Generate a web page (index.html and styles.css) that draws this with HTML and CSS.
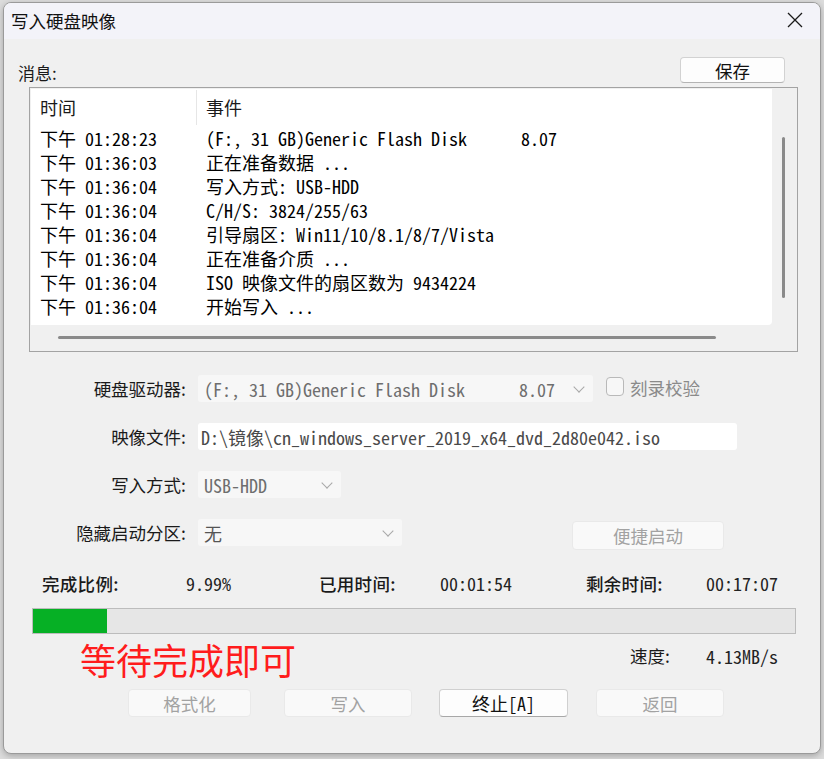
FILE: index.html
```html
<!DOCTYPE html>
<html lang="zh-CN">
<head>
<meta charset="utf-8">
<title>写入硬盘映像</title>
<link rel="stylesheet" href="styles.css">
</head>
<body>
<div class="window">
  <div class="titlebar">
    <span class="title">写入硬盘映像</span>
    <span class="close"><svg width="16" height="16" viewBox="0 0 16 16"><path d="M1 1 L15 15 M15 1 L1 15" stroke="#1a1a1a" stroke-width="1.3" fill="none"/></svg></span>
  </div>
  <div class="body">
    <div class="msg-head">
      <span class="msg-label">消息:</span>
      <button class="btn btn-save">保存</button>
    </div>
    <div class="list">
      <div class="list-main">
        <div class="list-header">
          <div class="col-time">时间</div>
          <div class="col-event">事件</div>
        </div>
        <div class="row"><span class="c-time">下午 01:28:23</span><span class="c-event">(F:, 31 GB)Generic Flash Disk      8.07</span></div>
        <div class="row"><span class="c-time">下午 01:36:03</span><span class="c-event">正在准备数据 ...</span></div>
        <div class="row"><span class="c-time">下午 01:36:04</span><span class="c-event">写入方式: USB-HDD</span></div>
        <div class="row"><span class="c-time">下午 01:36:04</span><span class="c-event">C/H/S: 3824/255/63</span></div>
        <div class="row"><span class="c-time">下午 01:36:04</span><span class="c-event">引导扇区: Win11/10/8.1/8/7/Vista</span></div>
        <div class="row"><span class="c-time">下午 01:36:04</span><span class="c-event">正在准备介质 ...</span></div>
        <div class="row"><span class="c-time">下午 01:36:04</span><span class="c-event">ISO 映像文件的扇区数为 9434224</span></div>
        <div class="row"><span class="c-time">下午 01:36:04</span><span class="c-event">开始写入 ...</span></div>
      </div>
      <div class="vscroll"><div class="vthumb"></div></div>
      <div class="hscroll"><div class="hthumb"></div></div>
      <div class="corner"></div>
    </div>

    <div class="frow">
      <label class="flabel">硬盘驱动器:</label>
      <div class="field combo w-drive"><span class="ftext mono">(F:, 31 GB)Generic Flash Disk      8.07</span><span class="chev"></span></div>
      <span class="check"></span><span class="check-label">刻录校验</span>
    </div>
    <div class="frow">
      <label class="flabel">映像文件:</label>
      <div class="field text w-file"><span class="ftext mono dark">D:\镜像\cn_windows_server_2019_x64_dvd_2d80e042.iso</span></div>
    </div>
    <div class="frow">
      <label class="flabel">写入方式:</label>
      <div class="field combo w-mode"><span class="ftext mono">USB-HDD</span><span class="chev"></span></div>
    </div>
    <div class="frow">
      <label class="flabel">隐藏启动分区:</label>
      <div class="field combo w-hide"><span class="ftext sans">无</span><span class="chev"></span></div>
      <button class="btn btn-dis btn-quick">便捷启动</button>
    </div>

    <div class="status">
      <span class="s-label">完成比例:</span>
      <span class="s-val">9.99%</span>
      <span class="s-label">已用时间:</span>
      <span class="s-val">00:01:54</span>
      <span class="s-label">剩余时间:</span>
      <span class="s-val">00:17:07</span>
    </div>

    <div class="progress"><div class="progress-fill" style="width:74px"></div></div>

    <div class="bottom-row">
      <span class="red">等待完成即可</span>
      <span class="speed-label">速度:</span>
      <span class="speed-val">4.13MB/s</span>
    </div>

    <div class="buttons">
      <button class="btn btn-dis b1">格式化</button>
      <button class="btn btn-dis b2">写入</button>
      <button class="btn btn-on b3">终止[A]</button>
      <button class="btn btn-dis b4">返回</button>
    </div>
  </div>
</div>
</body>
</html>
```
FILE: styles.css
```css
* { box-sizing: border-box; }
html, body { margin: 0; padding: 0; }
body {
  width: 824px;
  height: 759px;
  overflow: hidden;
  background: #dcdcdc;
  font-family: "Noto Sans CJK SC", "Noto Sans", sans-serif;
  color: #1a1a1a;
}
.window {
  margin: 2px 0 0 3px;
  width: 818px;
  height: 752px;
  border: 1px solid #9a9a9a;
  border-radius: 8px;
  background: #f0f0f0;
  overflow: hidden;
  box-shadow: 0 2px 6px rgba(0,0,0,0.25);
}
.titlebar {
  height: 36px;
  background: #f3f3f9;
  display: flex;
  align-items: center;
  justify-content: space-between;
  padding: 0 17px 0 7px;
}
.title { font-size: 17.5px; line-height: 20px; color: #111; margin-top: -1px; }
.close { display: flex; width: 16px; height: 16px; margin-top: -2px; }

.msg-head {
  margin: 18px 35px 0 14px;
  height: 26px;
  display: flex;
  justify-content: space-between;
  align-items: flex-end;
}
.msg-label { font-size: 17px; line-height: 20px; margin-bottom: 0; }
.btn {
  font-family: "Noto Sans CJK SC", sans-serif;
  font-size: 17.5px;
  border-radius: 4px;
  padding: 0;
  display: flex;
  align-items: center;
  justify-content: center;
}
.btn-save {
  width: 105px;
  height: 26px;
  background: #fdfdfd;
  border: 1px solid #d2d2d2;
  border-bottom-color: #b4b4b4;
  color: #111;
}

.list {
  margin: 4px 0 0 25px;
  width: 769px;
  height: 265px;
  border: 1px solid #a3a3a3;
  padding: 1px;
  background: #f0f0f0;
  display: grid;
  grid-template-columns: 741px 24px;
  grid-template-rows: 236px 25px;
}
.list-main {
  background: #fff;
  border-bottom-right-radius: 4px;
  overflow: hidden;
}
.list-header {
  height: 37px;
  display: flex;
  align-items: stretch;
  font-size: 18px;
}
.col-time {
  width: 166px;
  padding: 4px 0 0 9px;
  border-right: 1px solid #e6e6e6;
  margin-top: 1px;
  margin-bottom: 1px;
}
.col-event { padding: 5px 0 0 9px; }
.row {
  height: 24px;
  display: flex;
  align-items: center;
  font-family: "Noto Sans Mono CJK SC", "Liberation Mono", monospace;
  font-size: 18px;
  white-space: pre;
  color: #000;
}
.c-time { width: 166px; padding-left: 9px; }
.c-event { padding-left: 9px; }
.vscroll { position: relative; }
.vthumb {
  margin: 48px 0 0 10px;
  width: 3px;
  height: 161px;
  background: #8a8a8a;
  border-radius: 2px;
}
.hthumb {
  margin: 11px 0 0 27px;
  width: 658px;
  height: 3px;
  background: #8a8a8a;
  border-radius: 2px;
}

.frow {
  display: flex;
  align-items: flex-start;
  height: 27px;
  margin-top: 21px;
}
.list + .frow { margin-top: 23px; }
.flabel {
  width: 182px;
  text-align: right;
  font-size: 17.5px;
  line-height: 27px;
  margin-right: 12px;
  color: #1a1a1a;
}
.field {
  height: 27px;
  display: flex;
  align-items: center;
  justify-content: space-between;
  padding: 0 10px 0 6px;
  border-radius: 3px;
}
.combo { background: #f7f7f7; }
.text { background: #fff; padding-left: 3px; }
.w-drive { width: 395px; }
.w-file { width: 539px; }
.w-mode { width: 143px; }
.w-hide { width: 204px; }
.ftext { white-space: pre; color: #6e6e6e; }
.mono { font-family: "Noto Sans Mono CJK SC", "Liberation Mono", monospace; font-size: 18px; }
.sans { font-size: 18px; color: #555; }
.dark { color: #4a4a4a; }
.chev {
  width: 8px;
  height: 8px;
  border-right: 1px solid #a8a8a8;
  border-bottom: 1px solid #a8a8a8;
  transform: rotate(45deg);
  margin-top: -4px;
}
.check {
  width: 18px;
  height: 19px;
  margin: 2px 0 0 13px;
  border: 1px solid #b9b9b9;
  border-radius: 4px;
  background: #f7f7f7;
}
.check-label { margin-left: 6px; font-size: 17.5px; line-height: 25px; color: #8a8a8a; }
.btn-dis {
  background: #f9f9f9;
  border: 1px solid #e9e9e9;
  color: #a2a2a2;
}
.btn-quick { width: 152px; height: 29px; margin: 2px 0 0 170px; }

.status {
  margin-top: 24px;
  padding-left: 38px;
  height: 24px;
  display: grid;
  grid-template-columns: 144px 133px 121px 146px 120px auto;
  align-items: center;
}
.s-label { font-size: 17.5px; font-weight: 500; color: #1a1a1a; letter-spacing: 0.3px; }
.s-val {
  font-family: "Noto Sans Mono CJK SC", "Liberation Mono", monospace;
  font-size: 18px;
  color: #222;
}

.progress {
  margin: 14px 0 0 28px;
  width: 764px;
  height: 26px;
  border: 1px solid #bcbcbc;
  background: #e6e6e6;
}
.progress-fill { height: 100%; background: #06b025; }

.bottom-row {
  margin-top: 2px;
  height: 46px;
  display: flex;
  align-items: flex-start;
}
.red {
  margin-left: 76px;
  width: 240px;
  font-size: 36px;
  line-height: 46px;
  color: #ff1c1c;
}
.speed-label {
  margin: 8px 0 0 310px;
  width: 76px;
  font-size: 17.5px;
  line-height: 24px;
}
.speed-val {
  margin-top: 8px;
  line-height: 24px;
  font-family: "Noto Sans Mono CJK SC", "Liberation Mono", monospace;
  font-size: 18px;
  color: #222;
}

.buttons {
  margin-top: 7px;
  height: 28px;
  display: flex;
}
.buttons .btn { height: 28px; }
.b1 { width: 123px; margin-left: 124px; }
.b2 { width: 128px; margin-left: 33px; }
.b3 { width: 129px; margin-left: 27px; }
.b4 { width: 128px; margin-left: 28px; }
.btn-on {
  background: #fdfdfd;
  border: 1px solid #d0d0d0;
  border-bottom-color: #a8a8a8;
  color: #111;
  font-family: "Noto Sans Mono CJK SC", "Liberation Mono", monospace;
  font-size: 18px;
}
```
